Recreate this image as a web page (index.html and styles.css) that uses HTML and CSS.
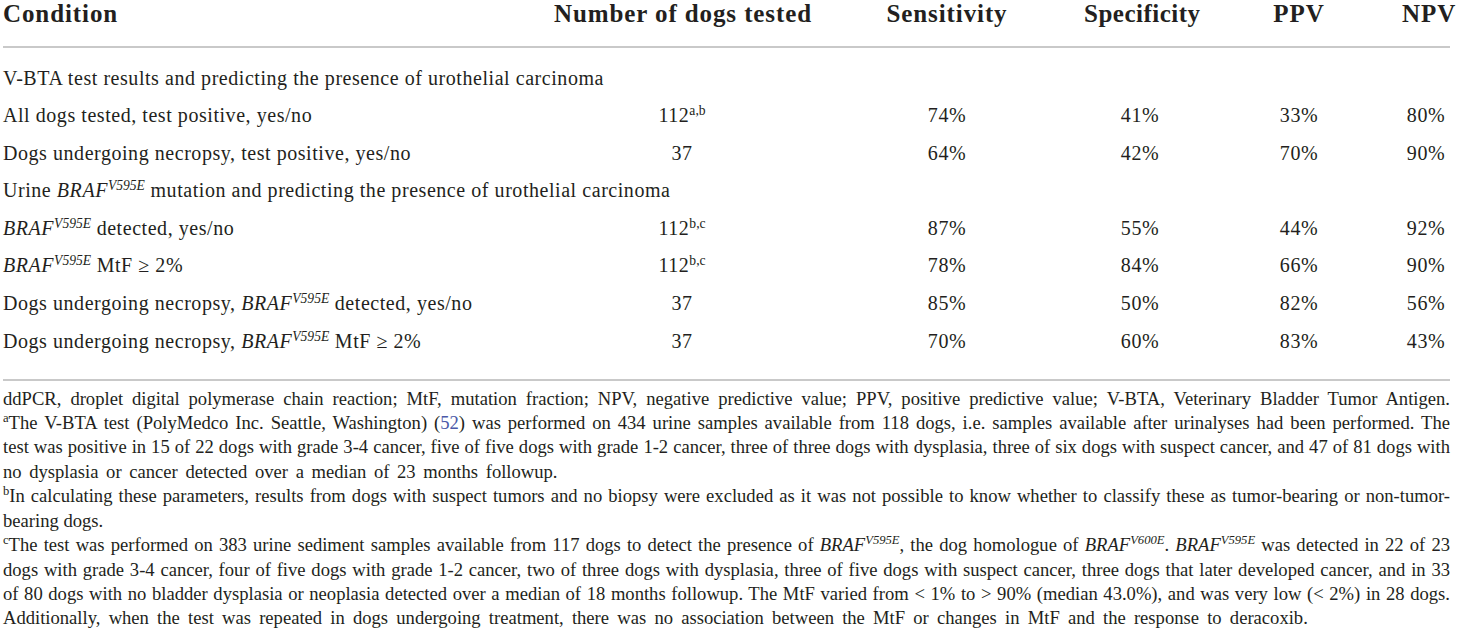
FILE: index.html
```html
<!DOCTYPE html>
<html lang="en">
<head>
<meta charset="utf-8">
<title>Table</title>
<link rel="stylesheet" href="styles.css">
</head>
<body>
<div class="page">
  <table class="data">
    <colgroup>
      <col class="c1"><col class="c2"><col class="c3"><col class="c4"><col class="c5"><col class="c6">
    </colgroup>
    <thead>
      <tr>
        <th class="lbl">Condition</th>
        <th>Number of dogs tested</th>
        <th>Sensitivity</th>
        <th>Specificity</th>
        <th>PPV</th>
        <th>NPV</th>
      </tr>
    </thead>
    <tbody>
      <tr class="first">
        <td class="lbl section" colspan="6">V-BTA test results and predicting the presence of urothelial carcinoma</td>
      </tr>
      <tr>
        <td class="lbl">All dogs tested, test positive, yes/no</td>
        <td>112<sup>a,b</sup></td>
        <td>74%</td><td>41%</td><td>33%</td><td>80%</td>
      </tr>
      <tr>
        <td class="lbl">Dogs undergoing necropsy, test positive, yes/no</td>
        <td>37</td>
        <td>64%</td><td>42%</td><td>70%</td><td>90%</td>
      </tr>
      <tr>
        <td class="lbl section" colspan="6">Urine <i>BRAF<sup>V595E</sup></i> mutation and predicting the presence of urothelial carcinoma</td>
      </tr>
      <tr>
        <td class="lbl"><i>BRAF<sup>V595E</sup></i> detected, yes/no</td>
        <td>112<sup>b,c</sup></td>
        <td>87%</td><td>55%</td><td>44%</td><td>92%</td>
      </tr>
      <tr>
        <td class="lbl"><i>BRAF<sup>V595E</sup></i> MtF ≥ 2%</td>
        <td>112<sup>b,c</sup></td>
        <td>78%</td><td>84%</td><td>66%</td><td>90%</td>
      </tr>
      <tr>
        <td class="lbl">Dogs undergoing necropsy, <i>BRAF<sup>V595E</sup></i> detected, yes/no</td>
        <td>37</td>
        <td>85%</td><td>50%</td><td>82%</td><td>56%</td>
      </tr>
      <tr class="last">
        <td class="lbl">Dogs undergoing necropsy, <i>BRAF<sup>V595E</sup></i> MtF ≥ 2%</td>
        <td>37</td>
        <td>70%</td><td>60%</td><td>83%</td><td>43%</td>
      </tr>
    </tbody>
  </table>

  <div class="notes">
    <p class="note"><span class="ln">ddPCR, droplet digital polymerase chain reaction; MtF, mutation fraction; NPV, negative predictive value; PPV, positive predictive value; V-BTA, Veterinary Bladder Tumor Antigen.</span></p>
    <p class="note">
      <span class="ln"><sup>a</sup>The V-BTA test (PolyMedco Inc. Seattle, Washington) (<a class="ref" href="#">52</a>) was performed on 434 urine samples available from 118 dogs, i.e. samples available after urinalyses had been performed. The</span>
      <span class="ln">test was positive in 15 of 22 dogs with grade 3-4 cancer, five of five dogs with grade 1-2 cancer, three of three dogs with dysplasia, three of six dogs with suspect cancer, and 47 of 81 dogs with</span>
      <span class="end wide">no dysplasia or cancer detected over a median of 23 months followup.</span>
    </p>
    <p class="note">
      <span class="ln"><sup>b</sup>In calculating these parameters, results from dogs with suspect tumors and no biopsy were excluded as it was not possible to know whether to classify these as tumor-bearing or non-tumor-</span>
      <span class="end">bearing dogs.</span>
    </p>
    <p class="note">
      <span class="ln"><sup>c</sup>The test was performed on 383 urine sediment samples available from 117 dogs to detect the presence of <i>BRAF<sup>V595E</sup></i>, the dog homologue of <i>BRAF<sup>V600E</sup></i>. <i>BRAF<sup>V595E</sup></i> was detected in 22 of 23</span>
      <span class="ln">dogs with grade 3-4 cancer, four of five dogs with grade 1-2 cancer, two of three dogs with dysplasia, three of five dogs with suspect cancer, three dogs that later developed cancer, and in 33</span>
      <span class="ln">of 80 dogs with no bladder dysplasia or neoplasia detected over a median of 18 months followup. The MtF varied from &lt; 1% to &gt; 90% (median 43.0%), and was very low (&lt; 2%) in 28 dogs.</span>
      <span class="end wider">Additionally, when the test was repeated in dogs undergoing treatment, there was no association between the MtF or changes in MtF and the response to deracoxib.</span>
    </p>
  </div>
</div>
</body>
</html>
```

FILE: styles.css
```css
html, body {
  margin: 0;
  padding: 0;
  background: #ffffff;
}

body {
  font-family: "Liberation Serif", "Times New Roman", serif;
  color: #231f20;
}

.page {
  width: 1460px;
  padding: 0 10px 0 3px;
  box-sizing: border-box;
}

.data {
  width: 1447px;
  border-collapse: collapse;
  table-layout: fixed;
}

.c1 { width: 551px; }
.c2 { width: 256px; }
.c3 { width: 274px; }
.c4 { width: 112px; }
.c5 { width: 206px; }
.c6 { width: 48px; }

.data th {
  font-size: 25px;
  font-weight: bold;
  letter-spacing: 0.9px;
  line-height: 28px;
  padding: 0 0 18px 0;
  text-align: center;
  white-space: nowrap;
  border-bottom: 2px solid #c9c9c9;
  vertical-align: top;
}

.data th:nth-child(4) {
  letter-spacing: 0.5px;
}

.data td {
  font-size: 20px;
  letter-spacing: 0.55px;
  line-height: 23px;
  padding: 7.3px 0;
  text-align: center;
  white-space: nowrap;
}

.data .lbl {
  text-align: left;
}

.data tr.first td {
  padding-top: 18.5px;
}

.data tr.last td {
  padding-bottom: 26px;
  border-bottom: 2px solid #c9c9c9;
}

.data sup, .note sup {
  font-size: 0.68em;
  line-height: 0;
  vertical-align: 0.55em;
  letter-spacing: 0;
}

.notes {
  padding-top: 6px;
}

.note {
  margin: 0;
  font-size: 18.6px;
  line-height: 24.4px;
}

.note .ln {
  display: block;
  text-align: justify;
  text-align-last: justify;
  white-space: nowrap;
}

.note .end {
  display: block;
  text-align: left;
  white-space: nowrap;
}

.note .wide {
  word-spacing: 3px;
}

.note .wider {
  word-spacing: 3.55px;
}

.ref {
  color: #4b59a8;
  text-decoration: none;
}
```
